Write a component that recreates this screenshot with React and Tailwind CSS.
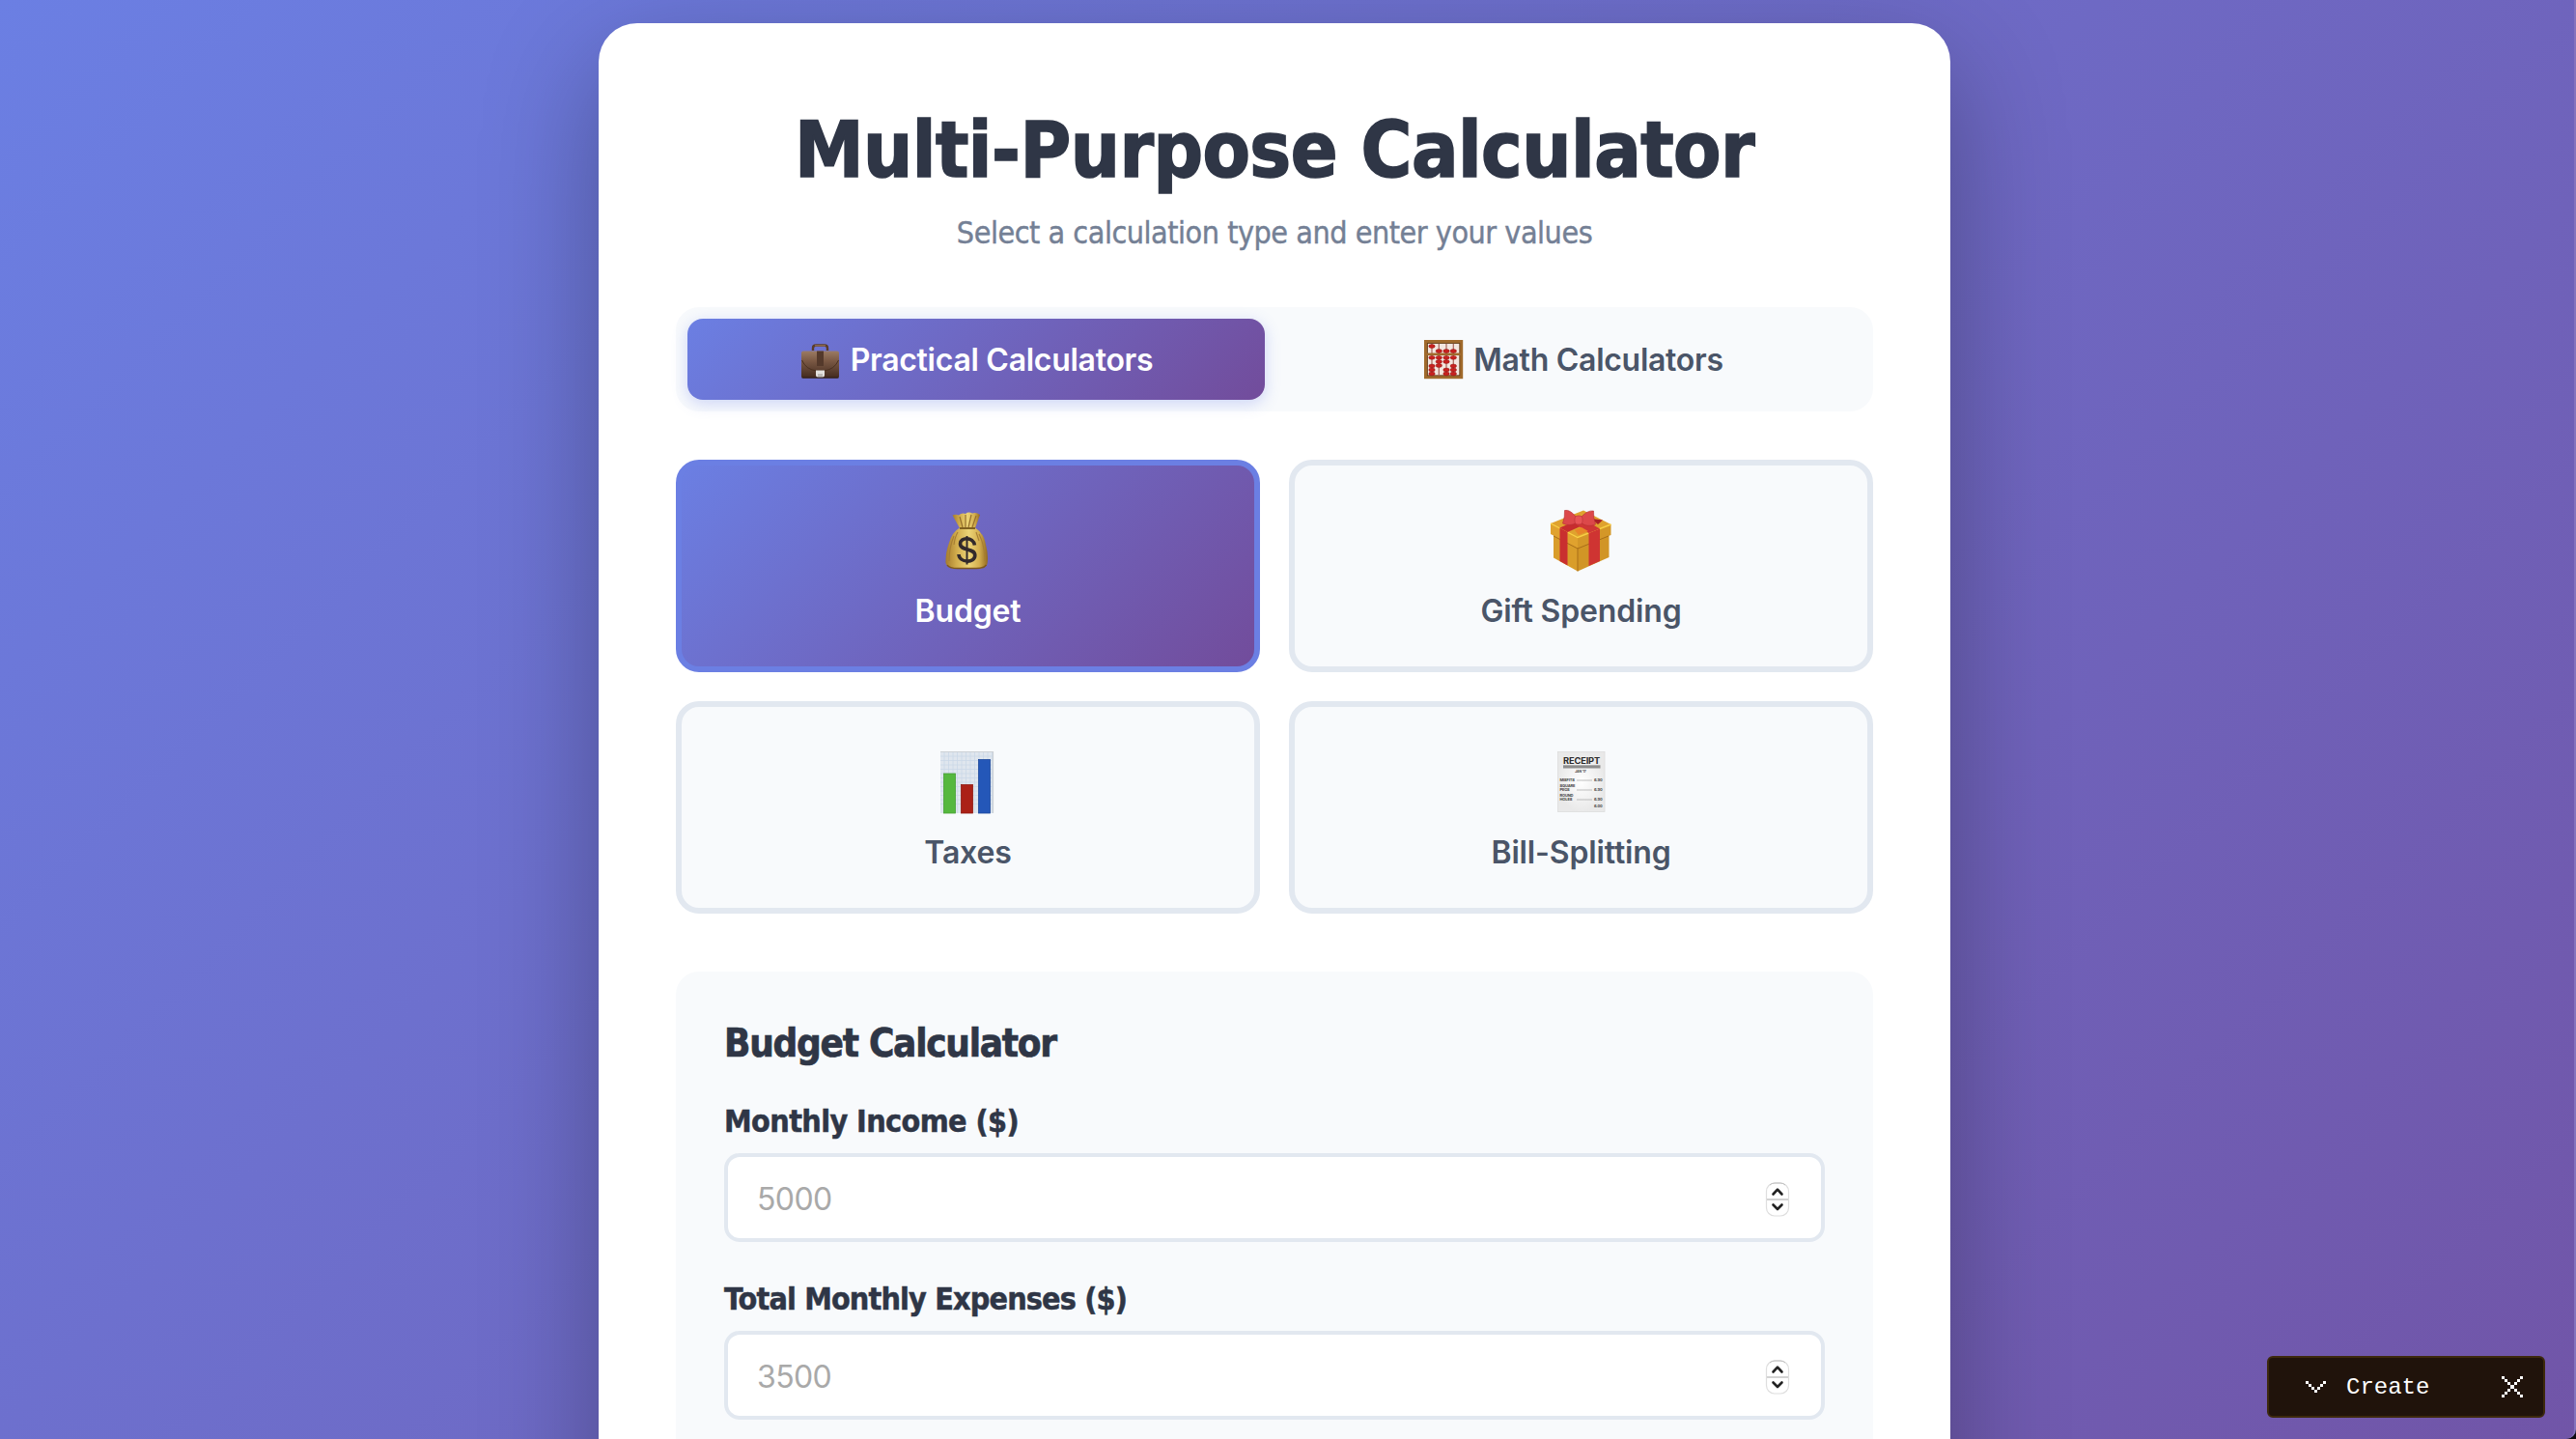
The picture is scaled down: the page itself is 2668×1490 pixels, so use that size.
import React, { useState } from 'react';

const BriefcaseIcon = () => (
    <svg viewBox="0 0 44 44" className="w-[44px] h-[44px]">
        <defs>
            <linearGradient id="leather" x1="0" y1="0" x2="0" y2="1">
                <stop offset="0" stopColor="#9b7b63" />
                <stop offset="0.35" stopColor="#7c5a45" />
                <stop offset="1" stopColor="#422a1f" />
            </linearGradient>
        </defs>
        <path d="M14 12 V9.5 Q14 6.5 17 6.5 H26 Q29 6.5 29 9.5 V12" fill="none" stroke="#5a3c2b" strokeWidth="2.4" />
        <path d="M16 6.8 H27" stroke="#8f6b4e" strokeWidth="1.4" />
        <rect x="2" y="12.5" width="39" height="28" rx="2" fill="url(#leather)" />
        <path d="M2.5 22 Q7 32 18 33 H25 Q36 32 40.5 22" fill="none" stroke="#49301f" strokeWidth="1" />
        <path d="M18 12.5 H25 V28 H18 Z" fill="#54392b" />
        <path d="M17 32.5 H26 V37 Q26 40 23 40 H20 Q17 40 17 37 Z" fill="#e4e2df" />
        <path d="M19 36 H24 V39.5 H19 Z" fill="#bdbab7" />
        <path d="M2.5 40 H40.5" stroke="#2e1c14" strokeWidth="1" />
    </svg>
);

const beads = [
    [10, 7.5], [17.3, 12.5], [25, 12.5], [32.3, 12.5],
    [10, 19.3], [17.3, 19.3], [25, 19.3], [32.3, 19.3],
    [17.3, 23.5], [25, 23.5], [10, 28], [17.3, 27.5], [32.3, 28],
    [10, 32], [32.3, 32], [25, 32], [10, 36], [25, 36], [32.3, 36],
];

const AbacusIcon = () => (
    <svg viewBox="0 0 44 44" className="w-[44px] h-[44px]">
        <rect x="3.6" y="2.6" width="37" height="37" fill="#f3e6df" stroke="#a06a2c" strokeWidth="3.2" />
        <rect x="5.4" y="4.4" width="33.4" height="33.4" fill="none" stroke="#5f3a15" strokeWidth="0.9" />
        {[10, 17.3, 25, 32.3].map((x) => (
            <path key={x} d={`M${x} 5 V38`} stroke="#a8655a" strokeWidth="1.2" />
        ))}
        <path d="M4 15.7 H40" stroke="#a06a2c" strokeWidth="2.6" />
        {beads.map(([x, y], i) => (
            <ellipse key={i} cx={x} cy={y} rx="3.2" ry="1.9" fill="#c9211f" stroke="#8f1615" strokeWidth="0.5" />
        ))}
    </svg>
);

const MoneyBagIcon = () => (
    <svg viewBox="0 0 80 90" className="w-[80px] h-[90px]">
        <defs>
            <linearGradient id="bag" x1="0" y1="0" x2="1" y2="0">
                <stop offset="0" stopColor="#a57b2d" />
                <stop offset="0.25" stopColor="#d0ab4b" />
                <stop offset="0.55" stopColor="#ecd477" />
                <stop offset="0.8" stopColor="#d3ae4e" />
                <stop offset="1" stopColor="#93691f" />
            </linearGradient>
        </defs>
        <path d="M26.5 18.5 Q30 17 33 18.5 Q36 15.5 40 17 Q43 14.5 47 16.5 Q51 15 55 18 L50 32 H34 Z" fill="url(#bag)" />
        <path d="M34 20 L37 31 M40 18 L40 31 M46 18 L43 31 M51 19 L47 31" stroke="#96702c" strokeWidth="1.2" />
        <path d="M34 31.5 H50 Q59 37 61 49 Q64 60 62.5 69 Q61 74 50 74 H31 Q21 73.5 19.5 68 Q19 58 23 47 Q26 36 34 31.5 Z" fill="url(#bag)" />
        <path d="M28 40 Q23 52 23 66 M54 38 Q60 50 60 66 M32 36 Q29 41 28 49 M51 36 L54 45" fill="none" stroke="#a67e34" strokeWidth="1.1" />
        <path d="M34 32 H50" stroke="#80601f" strokeWidth="2" />
        <path d="M21 70 Q23 73.5 32 73.5 H51 Q59 73.5 61.5 70" fill="none" stroke="#7e581c" strokeWidth="1.5" />
        <path d="M41.5 40 V69.5" stroke="#322a2b" strokeWidth="2" />
        <path d="M49.5 49.5 C48 40.5 34.5 41 34.5 48 C34.5 56 49.8 52 49.8 60 C49.8 68.5 33.5 68 33 59" fill="none" stroke="#322a2b" strokeWidth="3.6" />
    </svg>
);

const GiftIcon = () => (
    <svg viewBox="0 0 80 90" className="w-[80px] h-[90px]">
        <path d="M14 35 L39 48 V76.5 L14 62.5 Z" fill="#d99d2a" />
        <path d="M39 48 L71.5 34 V62 L39 76.5 Z" fill="#d19526" />
        <path d="M11 27 L45 13.5 L73.5 28 L39 42 Z" fill="#dfa22e" />
        <path d="M11 27 L39 41.5 V52.5 L11 38 Z" fill="#e0a22e" />
        <path d="M39 41.5 L73.5 28 V39 L39 52.5 Z" fill="#d49728" />
        <path d="M11 27 L39 41.5 L73.5 28" fill="none" stroke="#f8cf44" strokeWidth="1.4" />
        <path d="M39 52.5 V76.5 M14 40 L39 53 L71 40" fill="none" stroke="#a96e19" strokeWidth="1" />
        <path d="M20.5 31.5 L28.5 36 V70.5 L20.5 66 Z" fill="#c92f2f" />
        <path d="M50.5 37 L62 32.5 V66 L50.5 71 Z" fill="#cf3432" />
        <path d="M20.5 31.5 L42 22 L51 26 L28.5 36 Z" fill="#c62c2e" />
        <path d="M33 25 L42 21 L62 32.5 L50.5 37 Z" fill="#cf3635" />
        <path d="M36 34 L43 31 L50 35 L40 39 Z" fill="#e88628" />
        <path d="M53 22 L65 23.5 L60 28 Z" fill="#a91f26" />
        <path d="M38 21 Q31 12 25.5 13.5 Q26 20 23.5 27 Q31 30.5 38 26 Z" fill="#dc484a" stroke="#b52d33" strokeWidth="0.6" />
        <path d="M42 21 Q49 13 55.5 14 Q55 21 57.5 28 Q49 31.5 42 26 Z" fill="#dc484a" stroke="#b52d33" strokeWidth="0.6" />
        <rect x="36" y="19" width="8" height="9" rx="3" fill="#e65355" stroke="#ba3036" strokeWidth="0.6" />
    </svg>
);

const gridLines = [18, 22.5, 27, 31.5, 36, 40.5, 45, 49.5, 54, 58.5, 63, 67.5];

const ChartIcon = () => (
    <svg viewBox="0 0 80 90" className="w-[80px] h-[90px]">
        <rect x="14" y="13" width="55" height="64" fill="#dfe6ee" />
        {gridLines.map((n) => (
            <path key={n} d={`M14 ${n} H69 M${n} 13 V77`} stroke="#cad8e7" strokeWidth="0.8" />
        ))}
        <path d="M14 13.5 H69 M68.5 13 V77" stroke="#cdd1d6" strokeWidth="1.2" />
        <rect x="17.5" y="36" width="12" height="41" fill="#55b83e" stroke="#46a033" strokeWidth="0.8" />
        <rect x="35.5" y="47.5" width="12" height="29.5" fill="#ab2117" stroke="#8e1b13" strokeWidth="0.8" />
        <rect x="53.5" y="21.5" width="12" height="55.5" fill="#2457b8" stroke="#1c479b" strokeWidth="0.8" />
    </svg>
);

const receiptRows = [
    { y: 43.5, left: 'MISFITS', price: '6.90' },
    { y: 49.5, left: 'SQUARE' },
    { y: 53.5, left: 'PEGS', price: '6.90' },
    { y: 59.5, left: 'ROUND' },
    { y: 63.5, left: 'HOLES', price: '6.90' },
    { y: 71, price: '6.00' },
];

const ReceiptIcon = () => (
    <svg viewBox="0 0 80 90" className="w-[80px] h-[90px]" fontFamily="Inter, sans-serif">
        <defs>
            <radialGradient id="paper">
                <stop offset="0" stopColor="#ffffff" />
                <stop offset="1" stopColor="#e9e9e9" />
            </radialGradient>
        </defs>
        <rect x="13.5" y="13.5" width="48.5" height="62" fill="url(#paper)" stroke="#dcdcdc" strokeWidth="0.8" />
        <text x="38" y="25.5" fontSize="8.6" fontWeight="700" fill="#2b2b2b" textAnchor="middle" textLength="38" lengthAdjust="spacingAndGlyphs">RECEIPT</text>
        <rect x="19" y="27.3" width="38.5" height="3.2" fill="#8d8d8d" />
        <text x="37" y="35" fontSize="3.4" fontWeight="700" fill="#4a4a4a" textAnchor="middle">JAN '17</text>
        {receiptRows.map((row) => (
            <g key={row.y} fontSize="4" fontWeight="700" fill="#444">
                {row.left && <text x="15.5" y={row.y}>{row.left}</text>}
                {row.left && row.price && <path d={`M33 ${row.y - 0.5} H49`} stroke="#a5a5a5" strokeWidth="0.7" />}
                {row.price && <text x="59.5" y={row.y} textAnchor="end">{row.price}</text>}
            </g>
        ))}
    </svg>
);

const Stepper = () => (
    <svg viewBox="0 0 28 40" className="w-[28px] h-[40px] mt-[3px]">
        <rect x="2.5" y="3" width="23" height="34" rx="8.5" fill="#fff" stroke="#dedede" strokeWidth="1.2" />
        <path d="M6 5 Q8 3 11 3 H17 Q20 3 22 5" fill="none" stroke="#bdbdbd" strokeWidth="1" />
        <path d="M3 20 H25" stroke="#d3d3d3" strokeWidth="2" />
        <path d="M9.5 14.5 L14 9.7 L18.5 14.5 M9.5 25.5 L14 30 L18.5 25.5" fill="none" stroke="#222" strokeWidth="2.6" strokeLinecap="round" strokeLinejoin="round" />
    </svg>
);

const PixelChevron = () => (
    <svg viewBox="0 0 21 12" className="w-[21px] h-[12px]" fill="#fff" shapeRendering="crispEdges">
        <path d="M0 0h3v3h-3z M3 3h3v3h-3z M6 6h3v3h-3z M9 9h3v3h-3z M12 6h3v3h-3z M15 3h3v3h-3z M18 0h3v3h-3z" />
    </svg>
);

const PixelClose = () => (
    <svg viewBox="0 0 22 22" className="w-[22px] h-[22px]" fill="#fff" shapeRendering="crispEdges">
        <path d="M0 0h3v3h-3z M3 3h3v3h-3z M6 6h3v3h-3z M9 9h4v4h-4z M13 13h3v3h-3z M16 16h3v3h-3z M19 19h3v3h-3z M19 0h3v3h-3z M16 3h3v3h-3z M13 6h3v3h-3z M6 13h3v3h-3z M3 16h3v3h-3z M0 19h3v3h-3z" />
    </svg>
);

const tabs = [
    { id: 'practical', label: 'Practical Calculators', icon: BriefcaseIcon },
    { id: 'math', label: 'Math Calculators', icon: AbacusIcon },
];

const types = [
    { id: 'budget', label: 'Budget', icon: MoneyBagIcon, offset: 'mr-[5px]' },
    { id: 'gift', label: 'Gift Spending', icon: GiftIcon, offset: 'mr-[5px]' },
    { id: 'taxes', label: 'Taxes', icon: ChartIcon, offset: 'mr-[5px]' },
    { id: 'bill', label: 'Bill-Splitting', icon: ReceiptIcon, offset: 'ml-[5px]' },
];

const fields = [
    { id: 'income', label: 'Monthly Income ($)', placeholder: '5000', tracking: 'tracking-[-0.6px]' },
    { id: 'expenses', label: 'Total Monthly Expenses ($)', placeholder: '3500', tracking: 'tracking-[-0.85px]' },
];

const App = () => {
    const [tab, setTab] = useState('practical');
    const [type, setType] = useState('budget');

    return (
        <div className="h-[1490px] overflow-hidden bg-[#0c0a10]">
            <div className="relative h-full overflow-hidden pt-6 pr-[26px] border-r-2 border-[#8573bd] rounded-br-[10px] bg-[linear-gradient(135deg,#6b7fe3_0%,#724c9b_100%)] bg-[length:2668px_2380px] bg-no-repeat font-['DejaVu_Sans_Condensed','DejaVu_Sans',sans-serif] [font-stretch:condensed]">
                <div className="w-[1400px] h-[1800px] mx-auto px-20 pt-20 bg-white rounded-[40px] shadow-[0_40px_120px_rgba(0,0,0,0.3)]">
                    <header className="text-center">
                        <h1 className="h-[104px] leading-[104px] text-[80px] font-bold text-[#2f3646] tracking-[-0.5px] whitespace-nowrap [-webkit-text-stroke:1.6px_#2f3646]">Multi-Purpose Calculator</h1>
                        <p className="mt-3 h-[42px] leading-[42px] text-[32px] text-[#748095] tracking-[-0.47px] [-webkit-text-stroke:0.4px_#748095]">Select a calculation type and enter your values</p>
                    </header>

                    <div className="mt-14 flex gap-5 p-3 h-[108px] rounded-[24px] bg-[#f8fafc]">
                        {tabs.map(({ id, label, icon: Icon }) => (
                            <button
                                key={id}
                                onClick={() => setTab(id)}
                                className={`flex-1 flex items-center justify-center gap-[9px] pt-[2px] rounded-[16px] font-[Inter,sans-serif] text-[32px] font-semibold tracking-[-0.28px] ${tab === id ? 'text-white bg-[linear-gradient(135deg,#6b7fe3_0%,#724c9b_100%)] shadow-[0_4px_16px_rgba(102,126,234,0.3)]' : 'text-[#4a5568]'}`}
                            >
                                <Icon />
                                {label}
                            </button>
                        ))}
                    </div>

                    <div className="mt-[50px] grid grid-cols-2 gap-[30px]">
                        {types.map(({ id, label, icon: Icon, offset }) => (
                            <button
                                key={id}
                                onClick={() => setType(id)}
                                className={`h-[220px] flex flex-col items-center pt-[33px] rounded-[24px] border-[6px] font-[Inter,sans-serif] text-[32px] leading-[40px] font-semibold tracking-[-0.15px] ${type === id ? 'text-white border-[#6b7fe3] bg-[linear-gradient(135deg,#6b7fe3_0%,#724c9b_100%)]' : 'text-[#4a5568] border-[#e2e8f0] bg-[#f8fafc]'}`}
                            >
                                <span className={offset}><Icon /></span>
                                <span className="mt-[8px]">{label}</span>
                            </button>
                        ))}
                    </div>

                    <div className="mt-[60px] h-[900px] px-[50px] pt-[50px] rounded-[24px] bg-[#f8fafc] text-[#2f3646]">
                        <h2 className="h-[48px] leading-[48px] text-[40px] font-bold tracking-[-1.25px] [-webkit-text-stroke:0.7px_#2f3646]">Budget Calculator</h2>
                        <div className="mt-[38px] flex flex-col gap-[40px]">
                            {fields.map((field) => (
                                <div key={field.id}>
                                    <label htmlFor={field.id} className={`block h-[38px] leading-[38px] text-[32px] font-bold [-webkit-text-stroke:0.5px_#2f3646] ${field.tracking}`}>{field.label}</label>
                                    <div className="mt-[14px] h-[92px] flex items-center pl-[30px] pr-[31px] rounded-[16px] border-4 border-[#e2e8f0] bg-white">
                                        <input
                                            id={field.id}
                                            placeholder={field.placeholder}
                                            className="flex-1 pt-[3px] outline-none font-[Inter,sans-serif] text-[32px] tracking-[-0.6px] placeholder:text-[#a9a9a9]"
                                        />
                                        <Stepper />
                                    </div>
                                </div>
                            ))}
                        </div>
                    </div>
                </div>

                <div className="absolute left-[2348px] top-[1404px] w-[288px] h-[64px] flex items-center pl-[38px] pr-[21px] rounded-[6px] border-2 border-[#3d290d] bg-[#20130b] text-white">
                    <PixelChevron />
                    <span className="ml-[21px] mt-[2px] font-['Liberation_Mono',monospace] text-[24px] leading-[32px]">Create</span>
                    <span className="ml-auto"><PixelClose /></span>
                </div>
            </div>
        </div>
    );
};

export default App;
